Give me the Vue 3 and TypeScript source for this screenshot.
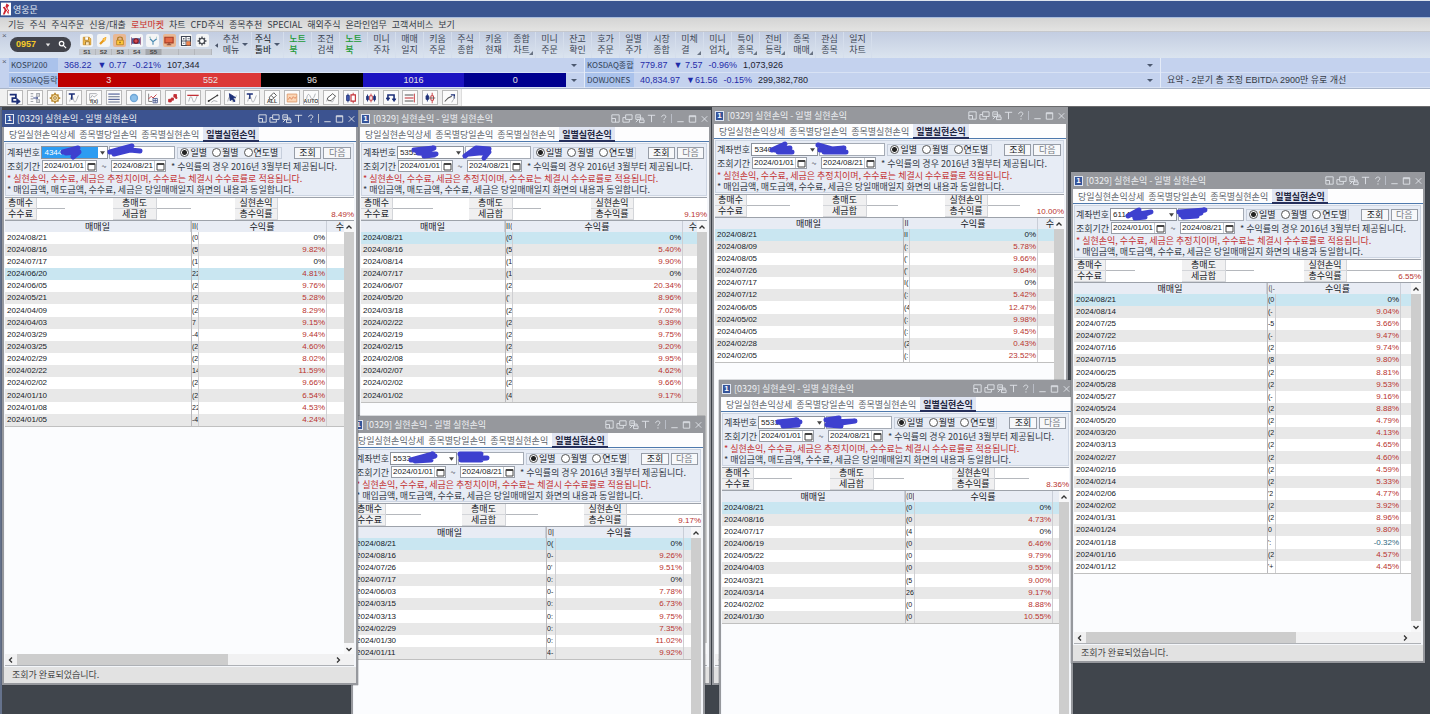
<script setup lang="ts">
type Shape = [d: string, stroke: string, fill?: string, width?: number]
type Trade = [date: string, rate: number, detail: string]

interface TradeWindow {
  id: string
  x: number
  y: number
  w: number
  h: number
  active?: boolean
  account: string
  total: string
  selected: number
  dateCol: number
  detailCol: number
  tailCol: number
  detailHead: string
  tailHead: string
  rules: number[]
  marks: string[]
  trades: Trade[]
}

const menus = ['기능', '주식', '주식주문', '신용/대출', '로보마켓', '차트', 'CFD주식', '종목추천', 'SPECIAL', '해외주식', '온라인업무', '고객서비스', '보기']
const hotMenu = '로보마켓'

const quickSets = ['S1', 'S2', 'S3', 'S4', 'S5', '', '', '']

const shortcuts: { a: string; b: string; green?: boolean; more?: boolean }[] = [
  { a: '노트', b: '북', green: true }, { a: '조건', b: '검색' }, { a: '노트', b: '북', green: true },
  { a: '미니', b: '주차' }, { a: '매매', b: '일지' }, { a: '키움', b: '주문' }, { a: '주식', b: '종합' },
  { a: '키움', b: '현재' }, { a: '종합', b: '차트', more: true }, { a: '미니', b: '주문' }, { a: '잔고', b: '확인' },
  { a: '호가', b: '주문' }, { a: '일별', b: '주가' }, { a: '시장', b: '종합' }, { a: '미체', b: '결', more: true },
  { a: '미니', b: '업차', more: true }, { a: '특이', b: '종목', more: true }, { a: '전비', b: '등락', more: true },
  { a: '종목', b: '매매', more: true }, { a: '관심', b: '종목' }, { a: '일지', b: '차트' },
]

const breadth = [
  { n: 3, c: 'b1' }, { n: 552, c: 'b2' }, { n: 96, c: 'b3' }, { n: 1016, c: 'b4' }, { n: 0, c: 'b5' },
]

const navy = '#1c2f78'
const grey = '#a3a7ad'
const red = '#c22f35'
const wave = 'M3 12 C5 5 6 5 7.500 10 S10 13 13 5'

const appIcons: { name: string; warm?: boolean; shapes: Shape[] }[] = [
  { name: '저장', shapes: [['M3 3h8l2 2v8H3z', '#c98a1c', '#f4bd4c', 1], ['M5 3v4h5V3', '#a8701c', '#fff', 1], ['M6 13V9h5v4', '#8a6420', '#fbe7c0', 1]] },
  { name: '열쇠', shapes: [['M4 12L9 7', '#e79a1c', 'none', 3], ['M8 5l4-2-1 4-2 2z', '#f0a020', '#ffd060', 1]] },
  { name: '잠금', warm: true, shapes: [['M5 7V4.500C5 2 11 2 11 4.500V7', '#a8751a', 'none', 1.5], ['M3.500 7h9v6h-9z', '#b07c18', '#ffc83c', 1], ['M8 9v2', '#5c4310', 'none', 1.5]] },
  { name: '캡처', shapes: [['M3 5h10v6H3z', navy, '#7a86bb', 1], ['M5 8a3 3 0 1 0 6 0a3 3 0 1 0-6 0z', '#7d1720', '#d84a52', 1.5], ['M2 3v10M14 3v10', '#8c4c78', 'none', 1]] },
  { name: '알림', shapes: [['M4 5l4 4 5-4M8 9v4', '#4a8ab0', 'none', 1.5], ['M3 3h2M12 3h1', '#63a890', 'none', 1]] },
  { name: '화면', warm: true, shapes: [['M2.500 3h11v7.500h-11z', '#a83c24', '#e46a48', 1.5], ['M5 13h6M8 10v3', '#8a4a38', 'none', 1.5]] },
  { name: '계산', shapes: [['M2 2h12v12H2z', '#3f4654', '#fff', 1.5], ['M8 2v12M2 8h12', '#3f4654', 'none', 1.2], ['M9 9h4.500v4.500H9z', '#d86c3c', '#f08a50', 1], ['M4 5h2M5 4v2M10 5h3M4 11h2', '#3f4654', 'none', 1]] },
  { name: '설정', shapes: [['M8 2v12M2 8h12M4 4l8 8M12 4l-8 8', '#4a4e55', 'none', 1.8], ['M4.500 8a3.500 3.500 0 1 0 7 0a3.500 3.500 0 1 0-7 0z', '#4a4e55', '#fff', 1.8]] },
]

const chartTools: { name: string; text?: string; shapes: Shape[] }[] = [
  { name: '연결', shapes: [['M2 4h7v4H5v4h5', navy, 'none', 2], ['M10 8.500l4 3.500-4 3z', navy, navy]] },
  { name: '배열', shapes: [['M3 3h3M3 6h3M3 9h3M3 12h3M10 3h3v3h-3zM10 10h3v3h-3z', grey, 'none', 1.4], ['M6 8h5M9.500 6.500L11 8 9.500 9.500', navy, 'none']] },
  { name: '환경', shapes: [['M8 2v12M2 8h12M4 4l8 8M12 4l-8 8', '#b98a34', 'none', 2], ['M4 8a4 4 0 1 0 8 0a4 4 0 1 0-8 0z', '#b98a34', '#f6dca0', 1.2], ['M6.500 8a1.500 1.500 0 1 0 3 0a1.500 1.500 0 1 0-3 0z', '#9c7020', '#fff']] },
  { name: '글자 지표', shapes: [[wave, grey], ['M2 3.500h7M5.500 4v6', navy, 'none', 1.8]] },
  { name: '수식', text: 'f(x)', shapes: [['M3 11V3h8M4 8l2-3 2 2 4-3', grey]] },
  { name: '가로선', shapes: [['M1.500 3.500h13M1.500 9.500h13', navy], ['M1.500 6.500h13M1.500 12.500h13', '#67738c', 'none', 1.2]] },
  { name: '원', shapes: [['M4 8a4 4 0 1 0 8 0a4 4 0 1 0-8 0z', '#6fa6d6', '#8cc0ea', 1.5]] },
  { name: '추가 차트', shapes: [['M3 3v9h4', '#777'], ['M3 9l3-3 2 2 4-4', red], ['M8 8.500h5v5H8zM10.500 8.500v5M8 11h5', '#4c5c90', '#fff']] },
  { name: '점', shapes: [['M3 9.500h3v3H3zM6 8h2.500v2.500H6zM9 4h3v3H9zM11 7h1.500v1.500H11z', red, red]] },
  { name: '기준선', shapes: [[wave, grey], ['M1.500 5h13', red, 'none', 1.5]] },
  { name: '추세선', shapes: [['M3 11.500L13 5', '#333', 'none', 1.2], ['M2.500 11h1v1h-1zM12.500 4.500h1v1h-1z', '#333', '#333'], ['M6 13l3-2 4 1', grey]] },
  { name: '선택', shapes: [[wave, grey], ['M5 3l1 8 2-2 2.500 3.500 1-1L9 8l3-.5z', navy, navy]] },
  { name: '글자', shapes: [[wave, grey], ['M2 3.500h7M5.500 4v5', navy, 'none', 1.6]] },
  { name: '모두 지움', text: 'ALL', shapes: [['M5 7l5-5 3 3-5 5H6L5 8z', '#444', '#fff'], ['M7 5l3 3', '#444']] },
  { name: '영역', shapes: [['M2.500 3.500h11v9h-11z', '#dd9a6c', '#fbd6b6'], ['M3.500 10l2-3 2 2.500 2-3 2 2 1.500-2', '#dd8458']] },
  { name: '자동', text: 'AUTO', shapes: [['M3 9C4 2 6 3 7.500 7S11 9 13 3', grey]] },
  { name: '지움', shapes: [[wave, grey], ['M4 8l6-5 3 3-5 5H5L4 9z', '#444', '#fff']] },
  { name: '캔들 둘', shapes: [['M4.500 3v10', navy], ['M3 5h3v6H3z', navy, '#4258b0'], ['M10.500 2v12', red], ['M8 4.500h5v7H8z', red, '#fff', 1.3]] },
  { name: '캔들 셋', shapes: [['M4 4v8M12 4v8', navy], ['M3 6h2v4H3zM11 6h2v4h-2z', navy, navy], ['M8 3v10', red], ['M6.500 5.500h3v5h-3z', red, '#fff']] },
  { name: '되돌림', shapes: [['M4.500 9V4.500h7V10', navy, 'none', 1.8], ['M2.500 8h4l-2 3zM9.500 9h4l-2 3z', navy, navy]] },
  { name: '간격', shapes: [['M2 4.500h10M2 11.500h10', '#555', 'none', 1.2], ['M2 8h10', red, 'none', 1.2], ['M13 3v10', red]] },
  { name: '캔들 비교', shapes: [['M5 3v9', navy], ['M3.500 5.500h3v4h-3z', navy, navy], ['M10.500 2v12', red], ['M9 5.500h3v5H9z', red, '#fff'], ['M7 8h7', '#555']] },
  { name: '돌파', shapes: [['M2 12l4-4 4-2', '#555', 'none', 1.2], ['M9 4.500h4v4', navy, 'none', 1.5], ['M10 13c1-3 3-3 3-7', grey]] },
]

const frameIcons: { name: string; d: string }[] = [
  { name: '축소', d: 'M2 2h8v8H2zM2 6h4v4' },
  { name: '복제', d: 'M4 2h7v5H4zM4 5H1v5h7V7' },
  { name: '잠금', d: 'M2 2h5v5H2zM3 4.500h4M2 10l3-3M6 7.500h5v3H6zM7 7V5.500h3V7' },
  { name: '글꼴', d: 'M2 2.500h8M6 2.500V10' },
  { name: '도움말', d: 'M4 4.500C4 1.500 9 1.500 8.500 4.500 8 6 6.500 5.500 6.500 7.500M6.500 9v1.500' },
]
const boxIcons: { name: string; d: string }[] = [
  { name: '최소화', d: 'M2.500 9.500h7' },
  { name: '최대화', d: 'M2.500 3h7v7h-7zM2.500 4h7' },
  { name: '닫기', d: 'M3 3.500l6 6M9 3.500l-6 6' },
]

const tabs = ['당일실현손익상세', '종목별당일손익', '종목별실현손익', '일별실현손익']
const periods = ['일별', '월별', '연도별']

const windows: TradeWindow[] = [
  {
    id: 'b', x: 358, y: 3, w: 353, h: 575, account: '5353', total: '9.19%', selected: 0,
    dateCol: 144, detailCol: 7, tailCol: 14, detailHead: 'II(', tailHead: '수', rules: [40, 28, 0],
    marks: ['M56 40L76 38L60 43L78 44L66 46L76 45', 'M107 46L118 38L131 39L111 44L131 42L126 48'],
    trades: [['08/21', 0, '(0'], ['08/16', 5.4, '(5'], ['08/14', 9.9, "(1"], ['07/17', 0, "(1"], ['06/07', 20.34, '(2'], ['05/20', 8.96, "('"], ['03/18', 7.02, '(2'], ['02/22', 9.39, '(2'], ['02/19', 9.75, '(2'], ['02/15', 9.2, '(2'], ['02/08', 9.95, '(2'], ['02/07', 4.62, '(2'], ['02/02', 9.66, '(2'], ['01/02', 9.17, '(4']],
  },
  {
    id: 'c', x: 712, y: 0, w: 356, h: 578, account: '5340', total: '10.00%', selected: 0,
    dateCol: 188, detailCol: 6, tailCol: 16, detailHead: 'II', tailHead: '수', rules: [43, 31, 32],
    marks: ['M60 43L73 37L63 43L78 41L66 45L80 45', 'M106 38L120 42L108 43L132 41L112 45L134 45'],
    trades: [['08/21', 0, 'II'], ['08/09', 5.78, '(:'], ['08/05', 9.66, "('"], ['07/26', 9.64, "('"], ['07/17', 0, 'I('], ['07/12', 5.42, '(:'], ['06/05', 12.47, '(4'], ['05/02', 9.98, '(:'], ['04/05', 9.45, '(:'], ['02/28', 0.43, '(2'], ['02/05', 23.52, '(:']],
  },
  {
    id: 'd', x: 351, y: 309, w: 354, h: 575, account: '5533-', total: '9.17%', selected: 0,
    dateCol: 192, detailCol: 9, tailCol: 7, detailHead: '미', tailHead: '', rules: [35, 32, 75],
    marks: ['M60 44L82 38L62 44L84 40L64 45L80 44', 'M109 38L130 38L110 41L136 42L110 44L130 44'],
    trades: [['08/21', 0, '0('], ['08/16', 9.26, '0-'], ['07/26', 9.51, "0'"], ['07/17', 0, '0:'], ['06/03', 7.78, '0-'], ['03/15', 6.73, '0:'], ['03/13', 9.75, '0:'], ['02/29', 7.35, '0:'], ['01/30', 11.02, '0:'], ['01/11', 9.92, '4-']],
  },
  {
    id: 'e', x: 719, y: 273, w: 354, h: 575, account: '5533-', total: '8.36%', selected: 0,
    dateCol: 183, detailCol: 9, tailCol: 6, detailHead: '(미', tailHead: '', rules: [38, 30, 34],
    marks: ['M59 42L78 40L62 43L81 42L64 46L79 45', 'M107 40L120 38L112 42L136 41L108 45L122 46'],
    trades: [['08/21', 0, '(0'], ['08/16', 4.73, '(0'], ['07/17', 0, '(4'], ['06/19', 6.46, '(0'], ['05/22', 9.79, '(0'], ['04/03', 9.55, '(0'], ['03/21', 9, '(5'], ['03/14', 9.17, '26'], ['02/02', 8.88, '(0'], ['01/30', 10.55, '(0']],
  },
  {
    id: 'a', x: 2, y: 3, w: 356, h: 575, active: true, account: '4344-', total: '8.49%', selected: 3,
    dateCol: 186, detailCol: 7, tailCol: 17, detailHead: 'II(', tailHead: '수', rules: [28, 34, 0],
    marks: ['M61 42L76 38L64 43L77 42L71 47', 'M108 42L130 36L112 44L128 40L138 41'],
    trades: [['08/21', 0, '(0'], ['08/16', 9.82, '(5'], ['07/17', 0, '(1'], ['06/20', 4.81, '22'], ['06/05', 9.76, '(2'], ['05/21', 5.28, '(2'], ['04/09', 8.29, '(2'], ['04/03', 9.15, '7'], ['03/29', 9.44, '-4'], ['03/25', 4.6, '(2'], ['02/29', 8.02, '(2'], ['02/22', 11.59, '14'], ['02/02', 9.66, '(2'], ['01/10', 6.54, '(2'], ['01/08', 4.53, '22'], ['01/05', 4.24, '-4']],
  },
  {
    id: 'f', x: 1071, y: 65, w: 354, h: 491, account: '6114', total: '6.55%', selected: 0,
    dateCol: 193, detailCol: 8, tailCol: 10, detailHead: '(|-', tailHead: '', rules: [29, 28, 75],
    marks: ['M57 44L68 38L62 43L80 40L64 46L74 45', 'M108 40L134 38L110 43L130 41L112 45L126 44'],
    trades: [['08/21', 0, '(0'], ['08/14', 9.04, '(-'], ['07/25', 3.66, '-5'], ['07/22', 9.47, '(-'], ['07/16', 9.74, '(2'], ['07/15', 9.8, '(8'], ['06/25', 8.81, '(2'], ['05/28', 9.53, '(2'], ['05/27', 9.16, '(-'], ['05/24', 8.88, '(2'], ['05/20', 4.79, '(2'], ['03/20', 4.13, '(2'], ['03/13', 4.65, '(2'], ['02/27', 4.6, '(2'], ['02/16', 4.59, '(2'], ['02/14', 5.33, '(2'], ['02/06', 4.77, "'2"], ['02/02', 3.92, '(2'], ['01/31', 8.96, '(2'], ['01/24', 9.8, '0'], ['01/18', -0.32, "':"], ['01/16', 4.57, '(2'], ['01/12', 4.45, "'+"]],
  },
]

const rateText = (r: number): string => (r === 0 ? '0%' : `${r.toFixed(2)}%`)
const rateClass = (r: number): string => (r > 0 ? 'up' : r < 0 ? 'down' : '')
</script>

<template>
  <div class="app">
    <header class="top">
      <div class="caption">
        <svg class="logo" viewBox="0 0 11 14" aria-hidden="true">
          <path d="M0 0h11v14H0z" fill="#fff" />
          <path d="M6 1l3 2-2 3 2 3-1 4-2-4-2 4H2l2-5-2-3 3-1z" fill="#cf2430" />
          <path d="M3 2l5 8" stroke="#fff" />
        </svg>
        <span>영웅문</span>
      </div>
      <nav class="menu">
        <a v-for="m in menus" :key="m" href="#" :class="{ hot: m === hotMenu }">{{ m }}</a>
      </nav>

      <div class="toolbar">
        <span class="grip">×</span>
        <div class="screen-no">
          <input type="text" value="0957" aria-label="화면번호" />
          <button type="button" aria-label="화면 목록"><svg viewBox="0 0 8 8"><path d="M1 2h6L4 6z" fill="#e8e8e8" /></svg></button>
          <button type="button" aria-label="검색"><svg viewBox="0 0 10 10"><path d="M1.500 4a2.500 2.500 0 1 0 5 0a2.500 2.500 0 1 0-5 0zM6 6l3 3" fill="none" stroke="#fff" stroke-width="1.4" /></svg></button>
        </div>
        <div class="quick">
          <div class="quick-icons">
            <button v-for="i in appIcons" :key="i.name" type="button" :class="{ warm: i.warm }" :aria-label="i.name">
              <svg viewBox="0 0 16 16"><path v-for="(s, k) in i.shapes" :key="k" :d="s[0]" :stroke="s[1]" :fill="s[2] || 'none'" :stroke-width="s[3] || 1" /></svg>
            </button>
          </div>
          <div class="quick-sets">
            <span v-for="(q, k) in quickSets" :key="k" :class="{ on: q === 'S5' }">{{ q }}</span>
          </div>
        </div>
        <button class="fold" type="button" aria-label="접기"><svg viewBox="0 0 4 6"><path d="M4 0v6L0 3z" fill="#4a5468" /></svg></button>
        <button class="pick" type="button"><span>추천<br />메뉴</span><i class="caret"></i></button>
        <button class="pick dark" type="button"><span>주식<br />툴바</span><i class="caret"></i></button>
        <button v-for="(s, k) in shortcuts" :key="k" class="shortcut" :class="{ green: s.green, more: s.more }" type="button"><span>{{ s.a }}<br />{{ s.b }}</span></button>
      </div>

      <div class="tickers">
        <span class="grip">×</span>
        <section class="ticker">
          <div class="quote">
            <b>KOSPI200</b><span class="q">368.22</span><span class="q">▼ 0.77</span><span class="q">-0.21%</span><span class="q vol">107,344</span><i class="caret"></i>
          </div>
          <div class="quote">
            <b>KOSDAQ등락</b>
            <div class="breadth"><span v-for="b in breadth" :key="b.c" :class="b.c">{{ b.n }}</span></div>
            <i class="caret"></i>
          </div>
        </section>
        <section class="ticker">
          <div class="quote">
            <b>KOSDAQ종합</b><span class="q">779.87</span><span class="q">▼ 7.57</span><span class="q">-0.96%</span><span class="q vol">1,073,926</span><i class="caret"></i>
          </div>
          <div class="quote">
            <b>DOWJONES</b><span class="q">40,834.97</span><span class="q">▼61.56</span><span class="q">-0.15%</span><span class="q vol">299,382,780</span><i class="caret"></i>
          </div>
        </section>
        <section class="ticker">
          <div class="quote"></div>
          <div class="quote news">요약 - 2분기 총 조정 EBITDA 2900만 유로 개선</div>
        </section>
      </div>

      <div class="charts">
        <div class="chart-tools">
          <button v-for="t in chartTools" :key="t.name" type="button" :aria-label="t.name">
            <svg viewBox="0 0 16 16">
              <path v-for="(s, k) in t.shapes" :key="k" :d="s[0]" :stroke="s[1]" :fill="s[2] || 'none'" :stroke-width="s[3] || 1" />
              <text v-if="t.text" x="8" y="14" text-anchor="middle">{{ t.text }}</text>
            </svg>
          </button>
        </div>
      </div>
    </header>

    <main class="desktop">
      <article
        v-for="w in windows"
        :key="w.id"
        class="win"
        :class="{ active: w.active }"
        :style="{ left: w.x + 'px', top: w.y + 'px', width: w.w + 'px', height: w.h + 'px' }"
      >
        <header class="bar">
          <span class="num">1</span>
          <h2>[0329] 실현손익 - 일별 실현손익</h2>
          <button v-for="f in frameIcons" :key="f.name" type="button" :aria-label="f.name"><svg viewBox="0 0 12 12"><path :d="f.d" /></svg></button>
          <i class="split"></i>
          <button v-for="f in boxIcons" :key="f.name" type="button" :aria-label="f.name"><svg viewBox="0 0 12 12"><path :d="f.d" /></svg></button>
        </header>

        <div class="body">
          <nav class="tabs">
            <a v-for="(t, k) in tabs" :key="t" href="#" :class="{ on: k === 3 }">{{ t }}</a>
          </nav>

          <form class="panel" @submit.prevent>
            <div class="line">
              <label class="name" :for="'acc-' + w.id">계좌번호</label>
              <div class="combo">
                <select :id="'acc-' + w.id"><option>{{ w.account }}</option></select>
                <svg viewBox="0 0 6 4" aria-hidden="true"><path d="M0 0h6L3 4z" fill="#444" /></svg>
              </div>
              <input class="owner" type="text" aria-label="계좌명" />
              <fieldset class="periods">
                <label v-for="(p, k) in periods" :key="p"><input type="radio" :name="'period-' + w.id" :checked="k === 0" />{{ p }}</label>
              </fieldset>
              <button class="go" type="submit">조회</button>
              <button class="go next" type="button">다음</button>
            </div>
            <div class="line">
              <label class="name" :for="'from-' + w.id">조회기간</label>
              <div class="date">
                <input :id="'from-' + w.id" type="text" value="2024/01/01" />
                <button type="button" aria-label="시작일 달력"><svg viewBox="0 0 9 9"><path d="M1 1.500h7v6.500H1zM1 2.500h7" /></svg></button>
              </div>
              <span class="tilde">~</span>
              <div class="date">
                <input type="text" value="2024/08/21" aria-label="종료일" />
                <button type="button" aria-label="종료일 달력"><svg viewBox="0 0 9 9"><path d="M1 1.500h7v6.500H1zM1 2.500h7" /></svg></button>
              </div>
              <span class="hint">* 수익률의 경우 2016년 3월부터 제공됩니다.</span>
            </div>
            <p class="note warn">* 실현손익, 수수료, 세금은 추정치이며, 수수료는 체결시 수수료률로 적용됩니다.</p>
            <p class="note">* 매입금액, 매도금액, 수수료, 세금은 당일매매일지 화면의 내용과 동일합니다.</p>
          </form>

          <table class="summary">
            <colgroup><col class="s1" /><col class="s2" /><col class="s3" /><col class="s4" /><col class="s5" /><col /></colgroup>
            <tbody>
              <tr>
                <th scope="row">총매수</th><td><i :style="{ width: w.rules[0] + 'px' }"></i></td>
                <th scope="row">총매도</th><td><i :style="{ width: w.rules[1] + 'px' }"></i></td>
                <th scope="row">실현손익</th><td><i :style="{ width: w.rules[2] + 'px' }"></i></td>
              </tr>
              <tr>
                <th scope="row">수수료</th><td></td>
                <th scope="row">세금합</th><td></td>
                <th scope="row">총수익률</th><td class="up total">{{ w.total }}</td>
              </tr>
            </tbody>
          </table>

          <div class="grid">
            <div class="sheet">
              <table class="trades">
                <colgroup>
                  <col :style="{ width: w.dateCol + 'px' }" /><col :style="{ width: w.detailCol + 'px' }" /><col /><col :style="{ width: w.tailCol + 'px' }" />
                </colgroup>
                <thead>
                  <tr><th scope="col">매매일</th><th scope="col" class="detail">{{ w.detailHead }}</th><th scope="col">수익률</th><th scope="col" class="tail">{{ w.tailHead }}</th></tr>
                </thead>
                <tbody>
                  <tr v-for="(t, k) in w.trades" :key="t[0]" :class="{ sel: k === w.selected }">
                    <td>2024/{{ t[0] }}</td><td class="detail">{{ t[2] }}</td><td class="rate" :class="rateClass(t[1])">{{ rateText(t[1]) }}</td><td></td>
                  </tr>
                </tbody>
              </table>
            </div>
            <div class="vbar">
              <button type="button" aria-label="위로"><svg viewBox="0 0 8 8"><path d="M1.500 5.500L4 3l2.500 2.500" /></svg></button>
              <div class="thumb"></div>
              <button type="button" aria-label="아래로"><svg viewBox="0 0 8 8"><path d="M1.500 3L4 5.500 6.500 3" /></svg></button>
            </div>
          </div>
          <div class="hbar">
            <button type="button" aria-label="왼쪽으로"><svg viewBox="0 0 8 8"><path d="M5 1.500L2.500 4 5 6.500" /></svg></button>
            <div class="track"><div class="thumb"></div></div>
            <button type="button" aria-label="오른쪽으로"><svg viewBox="0 0 8 8"><path d="M3 1.500L5.500 4 3 6.500" /></svg></button>
          </div>
          <footer class="status">조회가 완료되었습니다.</footer>
        </div>

        <svg class="marks" viewBox="0 0 160 60" aria-hidden="true"><path v-for="m in w.marks" :key="m" :d="m" /></svg>
      </article>
    </main>
  </div>
</template>

<style>
body {
  margin: 0;
  background: #40454c;
}
</style>

<style scoped>
.app {
  --digits: 'Liberation Sans', 'Noto Sans CJK KR', sans-serif;
  display: flex;
  flex-direction: column;
  height: 100vh;
  overflow: hidden;
  color: #333a45;
  font: 9px/11px 'Noto Sans CJK KR', sans-serif;
}
.app *, .app *::before, .app *::after { box-sizing: border-box; }
button, input, select { margin: 0; padding: 0; border: 0; background: none; color: inherit; font: inherit; border-radius: 0; }
button { display: flex; align-items: center; justify-content: center; }
a { color: inherit; text-decoration: none; }
svg { display: block; }
.caret { border: 3px solid transparent; border-top: 3px solid #4c5970; border-bottom: 0; }

.top { flex: none; border-bottom: 1px solid #6a6a6c; }
.caption { display: flex; align-items: center; gap: 2px; height: 18px; padding-left: 1px; border-top: 1px solid #dfe5ee; border-bottom: 1px solid #a9bcdc; background: #3a5590; color: #e6ecf6; }
.logo { width: 10px; height: 14px; }
.menu { display: flex; align-items: center; gap: 5px; height: 14px; padding-left: 8px; border-bottom: 1px solid #c6c8cc; background: linear-gradient(#d4d4d4, #e3e3e2); }
.menu .hot { color: #c9302c; }

.toolbar { display: flex; height: 26px; background: linear-gradient(#c3cde1, #dbe4ef); }
.grip { flex: none; width: 9px; padding-left: 2px; font: 8px/8px var(--digits); color: #59606e; }
.screen-no { display: flex; align-items: center; flex: none; width: 61px; height: 15px; margin: 5px 0 0 1px; padding-left: 6px; border-radius: 8px; background: #41434b; }
.screen-no input { width: 25px; color: #f5c928; font: bold 9px/11px var(--digits); }
.screen-no button { width: 14px; }
.screen-no svg { width: 9px; height: 9px; }
.screen-no button:first-of-type svg { width: 6px; height: 6px; }
.quick { flex: none; width: 133px; margin: 2px 0 0 8px; }
.quick-icons { display: flex; justify-content: space-between; padding: 0 3px 0 1px; }
.quick-icons button { width: 13px; height: 13px; background: #f4f5f6; border-radius: 2px; }
.quick-icons .warm { background: #e9b894; }
.quick-icons svg { width: 12px; height: 12px; }
.quick-sets { display: grid; grid-template-columns: repeat(8, 1fr); height: 6px; margin-top: 2px; background: #c5c9cf; color: #444; font: bold 6px/6px var(--digits); text-align: center; }
.quick-sets span { border-right: 1px solid #b4b7bc; }
.quick-sets .on { background: #a4a7ac; }
.fold { width: 8px; }
.fold svg { width: 3px; height: 5px; }
.pick, .shortcut { flex: none; padding-bottom: 2px; text-align: left; border-right: 1px solid #d5deec; color: #3d4654; }
.pick { width: 32px; gap: 3px; }
.dark { color: #101722; }
.shortcut { width: 28px; position: relative; }
.green { color: #1c9a35; font-weight: 500; }
.more::after { content: ''; position: absolute; right: 2px; bottom: 3px; border: 2px solid transparent; border-right-color: #6a7484; border-bottom-color: #6a7484; }

.tickers { display: grid; grid-template-columns: 9px 576fr 576fr 269fr; height: 31px; border-bottom: 1px solid #a9b5c9; background: #c4d2ee; }
.ticker { border-right: 1px solid #e4ebf7; }
.ticker:last-child { border: 0; }
.quote { display: flex; align-items: center; height: 15px; border-bottom: 1px solid #d8e2f4; font: 9px/14px var(--digits); color: #1f2ba8; white-space: nowrap; }
.quote b { flex: none; align-self: stretch; width: 49px; padding-left: 2px; background: #aac2eb; color: #333f55; font: 8px/14px 'Noto Sans CJK KR', sans-serif; }
.q { margin-left: 6px; }
.vol { color: #1c222e; }
.quote > .caret { margin: 0 7px 0 auto; }
.news { padding-left: 6px; color: #333a45; }
.breadth { display: grid; grid-template-columns: repeat(5, 1fr); flex: 1; align-self: stretch; margin-right: -1px; color: #e8e2e2; line-height: 14px; text-align: center; }
.breadth + .caret { margin-left: 6px; }
.b1 { background: #bd0000; }
.b2 { background: #dc3838; }
.b3 { background: #000; }
.b4 { background: #1c14c2; }
.b5 { background: #00008f; }

.charts { height: 17px; background: #fff; }
.chart-tools { display: flex; justify-content: space-between; align-items: center; width: 462px; height: 17px; padding: 0 3px 0 7px; border-right: 1px solid #ddd; background: #f0f0f0; }
.chart-tools button { width: 16px; height: 15px; border: 1px solid #b9b9b9; background: #fbfbfb; }
.chart-tools svg { width: 14px; height: 14px; }
.chart-tools text { font: bold 6px/6px var(--digits); fill: #444; }

.desktop { position: relative; flex: 1; min-height: 0; overflow: hidden; background: #40454c; box-shadow: inset 2px 0 #65728c; }
.win { position: absolute; display: flex; flex-direction: column; padding: 0 2px 2px; background: #96989d; box-shadow: 0 0 1px #33363c; }
.bar { display: flex; align-items: center; flex: none; height: 17px; margin: 0 -2px; padding: 0 1px 0 3px; background: #96989d; color: #eef0f3; }
.active .bar { background: #3c5390; }
.num { width: 9px; height: 10px; border: 1px solid #dfe6f2; background: #35549a; color: #fff; font: bold 8px/8px var(--digits); text-align: center; }
.bar h2 { flex: 1; margin: 0; padding-left: 3px; font-size: 9px; font-weight: normal; line-height: 16px; white-space: nowrap; }
.bar button { width: 12px; height: 12px; }
.bar svg { width: 11px; height: 11px; fill: none; stroke: #dfe2e8; }
.split { width: 1px; height: 9px; margin: 0 2px; background: #b9bdc6; }

.body { display: flex; flex-direction: column; flex: 1; min-height: 0; padding: 0 2px 0 1px; background: #f4f6fa; }
.tabs { display: flex; flex: none; height: 15px; margin: 0 -2px 0 -1px; padding-left: 5px; border-bottom: 1px solid #4e79ad; background: #fdfdfe; color: #5a5f68; line-height: 15px; white-space: nowrap; }
.tabs a { padding-right: 4px; }
.tabs .on { height: 15px; padding: 0 3px; border-bottom: 2px solid #252f5c; background: #e1e6f3; color: #1e2540; font-weight: bold; }

.panel { flex: none; height: 53px; margin: 1px 0; padding: 2px 0 0 1px; border: 1px solid #cdd5e2; background: #e7ecf5; }
.line { display: flex; align-items: center; height: 14px; white-space: nowrap; }
.line:first-child { height: 13px; }
.name { width: 35px; }
.combo { position: relative; width: 67px; height: 13px; }
.combo select { display: block; width: 67px; height: 13px; padding-left: 2px; border: 1px solid #8c929c; appearance: none; background: #fff; color: #222; font: 8px/11px var(--digits); }
.active .combo select { background: linear-gradient(90deg, #2c9cf2 56px, #fff 56px); color: #fff; }
.combo svg { position: absolute; right: 3px; top: 5px; width: 5px; height: 4px; }
.owner { width: 66px; height: 13px; margin-left: 1px; border: 1px solid #a5abb5; background: #fff; }
.periods { display: flex; align-items: center; width: 106px; height: 12px; margin: 0 12px 0 2px; padding: 0 0 0 2px; border: 1px solid #c6cedb; gap: 5px; color: #15181e; }
.periods label { display: flex; align-items: center; gap: 1px; }
.periods input { width: 9px; height: 9px; border: 1px solid #555; border-radius: 50%; appearance: none; background: #fff; }
.periods input:checked { background: radial-gradient(#222 0 2px, #fff 3px); }
.go { width: 28px; height: 12px; margin-right: 2px; border: 1px solid #979da7; background: #f7f8fa; color: #16181c; }
.next { color: #777c84; }
.date { display: flex; width: 55px; height: 12px; border: 1px solid #979da7; background: #fff; }
.date input { width: 42px; padding-left: 1px; color: #15181e; font: 8px/10px var(--digits); }
.date button { width: 11px; border-left: 1px solid #c3c7ce; }
.date svg { width: 9px; height: 9px; fill: none; stroke: #444; }
.tilde { width: 14px; text-align: center; }
.hint { padding-left: 5px; }
.note { margin: 0; white-space: nowrap; }
.warn { color: #c33030; }

table { border-collapse: separate; border-spacing: 0; table-layout: fixed; }
th, td { padding: 0; font-weight: normal; white-space: nowrap; }
.up { color: #b8322e; }
.down { color: #2d6880; }
.summary { flex: none; width: 100%; border-top: 1px solid #9da2aa; background: #fff; color: #15181e; }
.s1 { width: 32px; }
.s2 { width: 76px; }
.s3 { width: 44px; }
.s4 { width: 78px; }
.s5 { width: 43px; }
.summary th, .summary td { height: 11px; line-height: 10px; }
.summary th { border: solid #d3d5d9; border-width: 0 1px 1px 0; background: #f0f0f1; }
.summary td { text-align: right; vertical-align: bottom; }
.summary .total { font: 8px/11px var(--digits); }
.summary i { display: block; height: 1px; background: #b5b8bd; }

.grid { display: flex; flex: 1; min-height: 0; border-top: 1px solid #9da2aa; }
.sheet { flex: 1; min-width: 0; overflow: hidden; background: #fbfcfe; }
.trades { width: 100%; border-bottom: 1px solid #c0c0c0; background: #fff; color: #15181e; }
.trades th { height: 11px; border-right: 1px solid #c9ced8; background: #e8ecf4; }
.trades td { height: 12px; font: 8px/12px var(--digits); }
.trades tr:nth-child(7n) td { height: 13px; }
.trades tbody tr:nth-child(even) { background: #e8e8e8; }
.trades tbody tr.sel { background: #c9e6f1; }
.trades td:first-child { padding-left: 2px; }
.trades .detail { overflow: hidden; border-left: 1px solid #b9b9bd; border-right: 0; font-size: 7px; }
.trades .rate { padding-right: 1px; border: solid #cfcfd2; border-width: 0 1px; text-align: right; }
.trades .tail { border: 0; text-align: right; }

.vbar { display: flex; flex-direction: column; width: 10px; background: #f7f7f8; }
.vbar button { flex: none; height: 11px; }
.vbar .thumb { flex: 1; background: #cdcdcd; }
.hbar { display: flex; flex: none; height: 12px; padding-right: 10px; border-bottom: 1px solid #aeb1b6; background: #f1f1f2; }
.hbar button { width: 12px; }
.track { flex: 1; display: flex; }
.track .thumb { width: 67%; background: #cdcdcd; }
.vbar svg, .hbar svg { width: 8px; height: 8px; fill: none; stroke: #333; stroke-width: 1.3; }
.status { flex: none; height: 16px; margin: 1px -2px 0 -1px; padding-left: 8px; background: #e2e2e2; color: #444; line-height: 15px; }

.marks { position: absolute; left: 0; top: 0; width: 160px; height: 60px; pointer-events: none; }
.marks path { fill: none; stroke: #3d40cf; stroke-width: 5; stroke-linecap: round; stroke-linejoin: round; }
</style>
